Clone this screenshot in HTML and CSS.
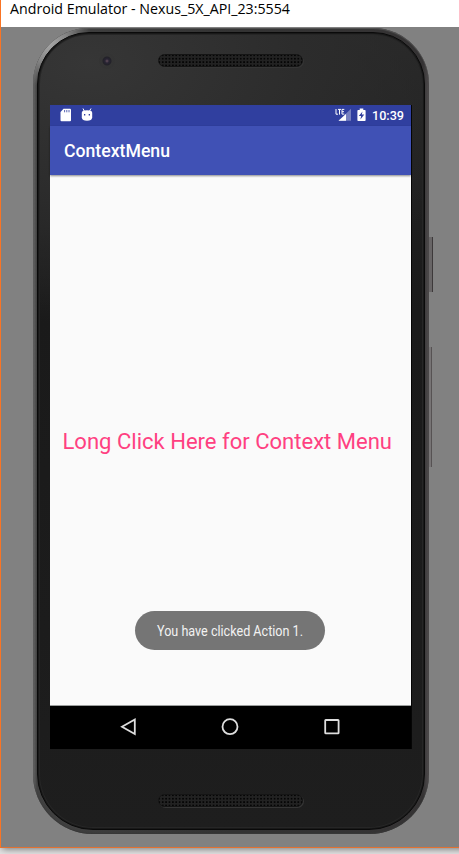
FILE: index.html
```html
<!DOCTYPE html>
<html lang="en">
<head>
<meta charset="utf-8">
<title>Android Emulator</title>
<link rel="stylesheet" href="styles.css">
</head>
<body>
<main class="window">
  <header class="titlebar">
    <svg class="label" width="300" height="27"><text class="title-text" x="9" y="14" textLength="280" lengthAdjust="spacingAndGlyphs">Android Emulator - Nexus_5X_API_23:5554</text></svg>
  </header>
  <section class="desktop">
    <div class="phone">
      <i class="button power"></i><i class="button volume"></i>
      <div class="face">
        <div class="forehead"><span class="camera"></span><span class="speaker"></span></div>
        <div class="screen">
          <div class="statusbar">
            <svg class="sd" width="12" height="14" viewBox="0 0 12 14"><path fill="#fff" d="M3.5.8H10q1 0 1 1v10.400q0 1-1 1H1.500q-1 0-1-1V4Z"/><path stroke="#303f9f" stroke-width=".8" d="M4.600 2v2.300M6.800 2v2.300M9 2v2.300"/></svg>
            <svg class="droid" width="12" height="14" viewBox="0 0 12 14"><path stroke="#fff" d="M2 .5l1.500 3M10 .5 8.500 3"/><path fill="#fff" d="M.8 4.700Q1 2.300 6 2.300t5.200 2.400v4.800Q10.800 12.700 6 12.700T.8 9.500Z"/><path fill="#303f9f" d="M3 6h1.300v1.400H3zM7.700 6H9v1.400H7.700z"/></svg>
            <svg class="signal" width="17" height="14" viewBox="0 0 17 14"><path fill="#7781c0" d="M16 .8v12H3.500L8 8.600Z"/><path fill="#fff" d="M11 6v6.800H3.500Z"/><path fill="none" stroke="#fff" d="M1 1v5.200h2M3 1.400h3M4.500 1.400v5.200M9.300 1.400H7v4.700h2.300M7 3.700h2"/></svg>
            <svg class="battery" width="9" height="14" viewBox="0 0 9 14"><path fill="#fff" d="M2.700.5h3.600v1.400h1.500q.8 0 .8.800v9.500q0 .8-.8.800H1.200q-.8 0-.8-.8V2.700q0-.8.800-.8h1.500Z"/><path fill="#303f9f" d="M5.500 3.500 1.800 8h2.300l-.7 3.400 3.900-4.900H4.800Z"/></svg>
            <svg class="clock" width="33" height="20"><text class="clock-text" x="0" y="15" textLength="32" lengthAdjust="spacingAndGlyphs">10:39</text></svg>
          </div>
          <div class="appbar"><svg class="label" width="130" height="49"><text class="app-text" x="14" y="31" textLength="106" lengthAdjust="spacingAndGlyphs">ContextMenu</text></svg></div>
          <div class="content">
            <svg class="message" width="361" height="40"><text class="message-text" x="12.500" y="28" textLength="329.500" lengthAdjust="spacingAndGlyphs">Long Click Here for Context Menu</text></svg>
            <div class="toast"><svg width="190" height="38"><text class="toast-text" x="22" y="24.500" textLength="146" lengthAdjust="spacingAndGlyphs">You have clicked Action 1.</text></svg></div>
          </div>
          <nav class="navbar">
            <svg width="361" height="43" viewBox="0 0 361 43" fill="none" stroke="#dedede" stroke-width="1.800"><path d="M84.800 13.500v14.500L72 20.800Z"/><circle cx="180" cy="20.700" r="7.500"/><rect x="275.200" y="14" width="13.400" height="13.400" rx=".6"/></svg>
          </nav>
        </div>
        <div class="chin"><span class="speaker"></span></div>
      </div>
    </div>
  </section>
</main>
</body>
</html>
```
FILE: styles.css
```css
* { box-sizing: border-box; }
body { margin: 0; height: 854px; overflow: hidden; background: #e3e3e3; font-family: Roboto, sans-serif; }
svg { display: block; flex: none; }
.window { width: 475px; height: 848px; border-left: 1px solid #f97424; border-bottom: 1px solid #e17131; box-shadow: 2px 1px 7px rgba(0,0,0,.5); }
.titlebar { height: 27px; background: #fff; }
.title-text { font: 15px "Open Sans", sans-serif; fill: #000; }
.desktop { height: 820px; background: #818181; padding: 1px 0 0 32px; }
.phone {
  position: relative; width: 396px; height: 806px; padding: 4px 4px 4px 4px; border-radius: 56px 56px 60px 60px;
  background: linear-gradient(90deg, #686868 0, #414141 4px, #333 50%, #353334 390px, #504d4e 396px);
  box-shadow: inset 0 1px 1px #555, inset 0 -1px 1px #383838;
}
.phone::before { content: ""; position: absolute; inset: 0; border-radius: inherit; background: radial-gradient(circle at 14px 14px, #aaa 0, #858585 20px, transparent 45px); }
.face {
  position: relative; height: 798px; padding: 72px 0 0 13px; border-radius: 52px 52px 56px 56px;
  background: radial-gradient(ellipse 420px 260px at 50px 30px, #363636, #2c2c2c 50%, transparent), linear-gradient(#272727, #1a1a1a 35%, #1c1c1c 75%, #1e1e1e);
  border: 1px solid #0a0a0a; box-shadow: inset 0 0 0 1px #191919, inset 0 0 0 2px #262626;
}
.button { position: absolute; background: #686566; border-right: 1px solid #3d393a; }
.power { left: 396px; top: 209px; width: 4px; height: 55px; }
.volume { left: 396px; top: 319px; width: 3px; height: 120px; background: #777475; border-color: #565253; }
.forehead { position: absolute; left: 61px; top: 20px; display: flex; gap: 43px; }
.camera { width: 16px; height: 16px; border-radius: 50%; background: radial-gradient(circle at 8px 8px, #65505d 0, #292534 2px, #222128 4px, #343434 5px, #333 8px); }
.speaker { display: block; width: 145px; height: 13px; border-radius: 7px; border: 1px solid #151515; background: radial-gradient(circle, #050505 .7px, #222 1.300px) 2px 2px / 3.400px 3.400px; box-shadow: 1px 1px 0 #353535; }
.forehead .speaker { margin-top: 1px; }
.screen { width: 362px; height: 644px; margin-left: -1px; background: #000; border-right: 1px solid #050505; }
.statusbar { height: 21px; display: flex; align-items: flex-start; padding: 3px 0 0 10px; background: #303f9f; }
.droid { margin-left: 9px; }
.signal { margin-left: 242px; }
.battery { margin-left: 5px; }
.clock { margin: -3px 0 0 6px; }
.clock-text { font: 500 13px Roboto, sans-serif; fill: #fff; }
.appbar { position: relative; height: 49px; background: #4051b5; box-shadow: 0 1px 2px rgba(0,0,0,.45); }
.app-text { font: 500 18px Roboto, sans-serif; fill: #fff; }
.content { height: 531px; padding-top: 246px; background: #fafafa; border-bottom: 1px solid #9b9e9d; }
.message-text { font: 22.500px Roboto, sans-serif; fill: #ff4081; }
.toast { width: 190px; height: 39px; margin: 149.500px 0 0 85px; border-radius: 20px; background: #757575; }
.toast-text { font: 14px Roboto, sans-serif; fill: #f2f2f2; }
.navbar { height: 43px; background: #000; }
.chin { padding: 45px 0 0 107px; }
```
